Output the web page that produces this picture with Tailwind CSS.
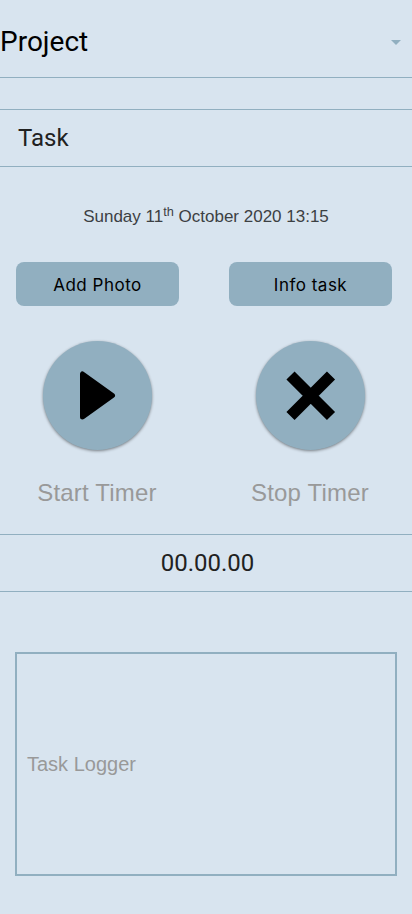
<!DOCTYPE html>
<html lang="en">
<head>
<meta charset="utf-8">
<title>Task timer</title>
<script src="https://cdn.jsdelivr.net/npm/@tailwindcss/browser@4"></script>
</head>
<body class="bg-[#d8e4ef] font-['Liberation_Sans',sans-serif]">
<main class="flex h-[914px] w-[412px] flex-col overflow-hidden whitespace-nowrap">
  <header class="flex h-[78px] items-center justify-between border-b border-[#91afc0] pt-[6px] pr-[11px]">
    <h1 class="font-[Roboto,sans-serif] text-[28px] leading-8 text-black">Project</h1>
    <svg class="mt-[2px] h-[5px] w-[10px]" viewBox="0 0 10 5" fill="#91afc0"><path d="M0 0H10L5 5Z"/></svg>
  </header>
  <section class="mt-[31px] flex h-[58px] items-center border-y border-[#91afc0] pl-[18px]">
    <h2 class="font-[Roboto,sans-serif] text-2xl leading-8 text-[#212121]">Task</h2>
  </section>
  <p class="mt-[38px] flex h-6 items-center justify-center text-[17px] leading-6 text-[#3c4043]"><span>Sunday 11<sup class="text-[12.75px]">th</sup> October 2020 13:15</span></p>
  <section class="mt-[33px] flex justify-between pr-5 pl-4">
    <div class="flex w-[163px] flex-col items-center">
      <button class="h-11 w-full rounded-lg bg-[#91afc0] pt-0.5 font-[Inter,sans-serif] text-[17px] leading-6 tracking-[0.5px] text-black">Add Photo</button>
      <button class="mt-[35px] size-[109px] rounded-full bg-[#91afc0] shadow-[0_1px_3px_rgba(0,0,0,0.45)]" aria-label="Start">
        <svg class="size-[109px]" viewBox="0 0 109 109"><path d="M39.5 33V76L69.5 54.5Z" stroke="#000" stroke-width="5" stroke-linejoin="round"/></svg>
      </button>
      <span class="mt-[27px] mr-px text-2xl leading-8 tracking-[0.2px] text-[#999]">Start Timer</span>
    </div>
    <div class="flex w-[163px] flex-col items-center">
      <button class="h-11 w-full rounded-lg bg-[#91afc0] pt-0.5 font-[Inter,sans-serif] text-[17px] leading-6 tracking-[0.5px] text-black">Info task</button>
      <button class="mt-[35px] size-[109px] rounded-full bg-[#91afc0] shadow-[0_1px_3px_rgba(0,0,0,0.45)]" aria-label="Stop">
        <svg class="size-[109px]" viewBox="0 0 109 109"><path d="M34.5 34.5L75 75M75 34.5L34.5 75" stroke="#000" stroke-width="11.5"/></svg>
      </button>
      <span class="mt-[27px] mr-px text-2xl leading-8 tracking-[0.2px] text-[#999]">Stop Timer</span>
    </div>
  </section>
  <section class="mt-[25px] flex h-[58px] items-center justify-center border-y border-[#91afc0] pl-[3px]">
    <span class="font-[Roboto,sans-serif] text-2xl leading-8 text-[#212121]">00.00.00</span>
  </section>
  <section class="mx-[15px] mt-[60px] flex h-[224px] items-center border-2 border-[#91afc0] pl-[10px]">
    <span class="text-xl leading-6 text-[#999]">Task Logger</span>
  </section>
</main>
</body>
</html>
